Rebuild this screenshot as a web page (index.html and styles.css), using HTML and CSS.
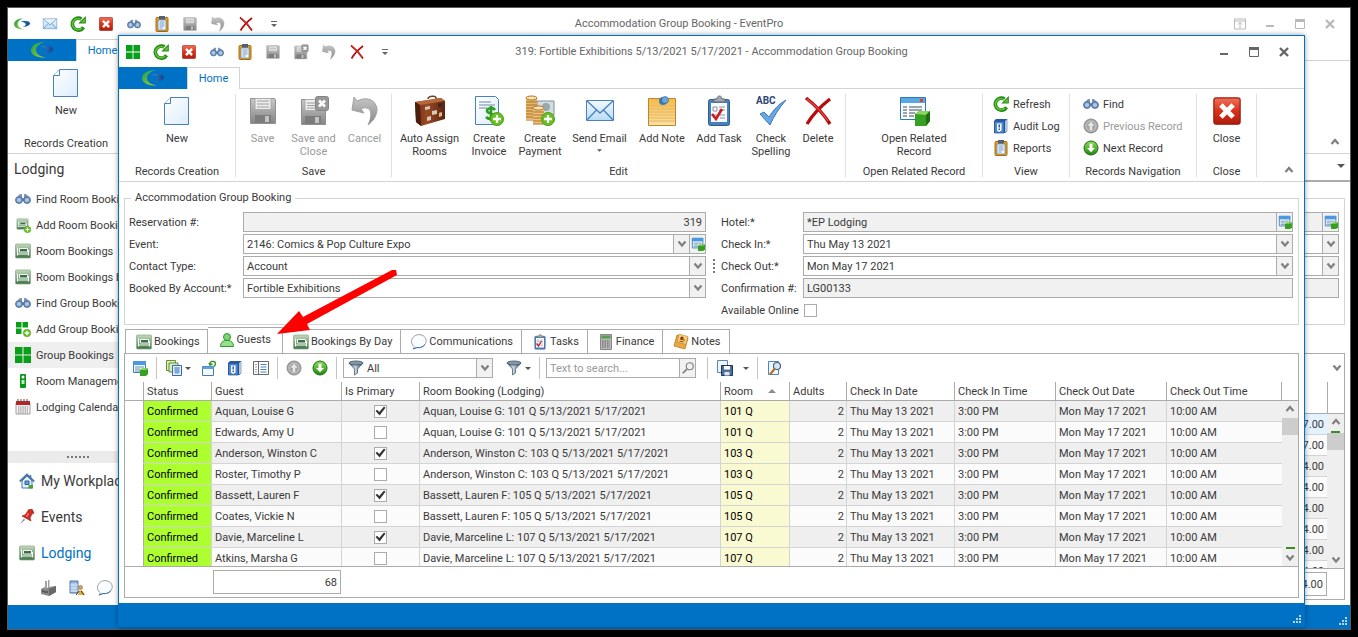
FILE: index.html
```html
<!DOCTYPE html>
<html lang="en">

<head>
  <meta charset="UTF-8">
  <meta name="viewport" content="width=device-width, initial-scale=1.0">
  <title>Accommodation Group Booking - EventPro</title>

  <link rel="stylesheet" href="styles.css">
</head>

<body>
  <!-- icon sprite -->
  <svg class="sprite" aria-hidden="true">
    <defs>
      <linearGradient id="g-red" x2="0" y2="1"><stop offset="0" stop-color="#f0705a"/><stop offset=".5" stop-color="#d8321c"/><stop offset="1" stop-color="#b01c0c"/></linearGradient>
      <linearGradient id="g-green" x2="0" y2="1"><stop offset="0" stop-color="#8fdc5a"/><stop offset="1" stop-color="#1f8a12"/></linearGradient>
      <linearGradient id="g-grey" x2="0" y2="1"><stop offset="0" stop-color="#c8c8c8"/><stop offset="1" stop-color="#858585"/></linearGradient>
      <linearGradient id="g-blue" x2="0" y2="1"><stop offset="0" stop-color="#f4faff"/><stop offset="1" stop-color="#b9dcf6"/></linearGradient>
      <linearGradient id="g-doc" x2="1" y2="1"><stop offset="0" stop-color="#ffffff"/><stop offset="1" stop-color="#dcedfc"/></linearGradient>
      <linearGradient id="g-bed" x2="0" y2="1"><stop offset="0" stop-color="#c8dcc0"/><stop offset=".5" stop-color="#7ca480"/><stop offset="1" stop-color="#3c7444"/></linearGradient>
      <linearGradient id="g-gold" x2="0" y2="1"><stop offset="0" stop-color="#f6ba48"/><stop offset="1" stop-color="#fbe3a0"/></linearGradient>
      <linearGradient id="g-brown" x2="1" y2="0"><stop offset="0" stop-color="#6e2c14"/><stop offset=".4" stop-color="#9a4a24"/><stop offset="1" stop-color="#5a2410"/></linearGradient>
      <linearGradient id="g-funnel" x2="1" y2="0"><stop offset="0" stop-color="#4a5b6c"/><stop offset=".45" stop-color="#c8d8e6"/><stop offset="1" stop-color="#2c3c4c"/></linearGradient>
      <linearGradient id="g-logo" x2="1" y2="1"><stop offset="0" stop-color="#18a050"/><stop offset="1" stop-color="#a6cf2c"/></linearGradient>
      <linearGradient id="g-swoosh" x2="1" y2="0"><stop offset="0" stop-color="#2c98cc"/><stop offset="1" stop-color="#1c3c8c"/></linearGradient>
    </defs>

    <symbol id="logo" viewBox="0 0 22 16">
      <path d="M14 0C5 0 0 4 0 8.500S6 16 15 15.500C9 14.500 5 12 5 8s4-7 9-8z" fill="url(#g-logo)"/>
      <path d="M9 4.500c4-1.500 12-1 13 2.500 0 3-5 5-10 5 3-1 4-2 4-3.500S13 5 9 4.500z" fill="url(#g-swoosh)"/>
    </symbol>
    <symbol id="mail" viewBox="0 0 32 32">
      <path d="M2.500 5.500h27v20h-27z" fill="url(#g-blue)" stroke="#4a80c0"/>
      <path d="M3 6l13 12L29 6M3 25l9.500-10M29 25l-9.500-10" fill="none" stroke="#4a80c0" stroke-width="1.300"/>
    </symbol>
    <symbol id="refresh" viewBox="0 0 16 16">
      <path d="M13.500 11.200A6 6 0 1 1 11.500 3" fill="none" stroke="#238a14" stroke-width="3.600"/>
      <path d="M15.800 0v7.500H8.300z" fill="#238a14"/>
      <path d="M12 12A5.500 5.500 0 1 1 11 3.600" fill="none" stroke="#62c43a" stroke-width="1.600"/>
      <path d="M14.800 2.400v4h-4z" fill="#62c43a"/>
    </symbol>
    <symbol id="close-red" viewBox="0 0 16 16">
      <rect x=".5" y=".5" width="15" height="15" rx="1.200" fill="url(#g-red)" stroke="#9c1a0c" stroke-width=".7"/>
      <path d="M5.500 5.500l5 5M10.500 5.500l-5 5" stroke="#fff" stroke-width="2.800" stroke-linecap="square"/>
    </symbol>
    <symbol id="find" viewBox="0 0 16 16">
      <path d="M3 5l2-2h2v4h2V3h2l3 3v4H2z" fill="#8098b8"/>
      <circle cx="4" cy="9" r="3.500" fill="#6c8cb4" stroke="#4c6c98" stroke-width=".8"/>
      <circle cx="12" cy="9" r="3.500" fill="#6c8cb4" stroke="#4c6c98" stroke-width=".8"/>
      <circle cx="4" cy="9" r="2.100" fill="#a8c8ec"/><circle cx="12" cy="9" r="2.100" fill="#a8c8ec"/>
    </symbol>
    <symbol id="report" viewBox="0 0 16 16">
      <rect x="2" y="1.500" width="12" height="14" rx="1" fill="#e8a020" stroke="#a86c10"/>
      <path d="M4 4h8v10H4z" fill="#f4faff" stroke="#5078a8" stroke-width=".7"/>
      <path d="M5 0h6v3.500H5z" fill="#50607c"/>
      <path d="M5.500 6h5M5.500 8h5M5.500 10h5M5.500 12h3" stroke="#6888b8" stroke-width=".9"/>
    </symbol>
    <symbol id="save" viewBox="0 0 32 32">
      <path d="M3.500 3.500h24l1 1v24h-25z" fill="url(#g-grey)" stroke="#909090"/>
      <path d="M8 3.500h16v11H8z" fill="#ededed" stroke="#aaa"/>
      <path d="M10 6h12M10 9h12M10 12h12" stroke="#9c9c9c"/>
      <path d="M8 20h16v8H8z" fill="#7c7c7c"/><path d="M18 21h4v6h-4z" fill="#c4c4c4"/>
    </symbol>
    <symbol id="save-close" viewBox="0 0 32 32">
      <path d="M3.500 4.500h24v25h-24z" fill="url(#g-grey)" stroke="#909090"/>
      <path d="M7 4.500h14v11H7z" fill="#ededed" stroke="#aaa"/>
      <path d="M9 8h12M9 10.500h12M9 13h12" stroke="#9c9c9c"/>
      <path d="M7 21h16v8H7z" fill="#7c7c7c"/><path d="M17 22h4v6h-4z" fill="#c4c4c4"/>
      <rect x="17.500" y="1.500" width="13" height="14" rx="2" fill="#989898" stroke="#848484"/>
      <path d="M21 5.500l6 6M27 5.500l-6 6" stroke="#fff" stroke-width="2.600"/>
    </symbol>
    <symbol id="undo" viewBox="0 0 32 32">
      <path d="M5 2l3 4c10-5 19-1 20 8 0 7-4 12-9 16 4-8 4-16-1-17-3-.5-4 0-6 1l3 4-12-3z" fill="url(#g-grey)" stroke="#a0a0a0"/>
    </symbol>
    <symbol id="delete" viewBox="0 0 32 32">
      <path d="M4 3c8 6 17 15 24 26M28 4C19 11 11 19 5 29" fill="none" stroke="#b80c0c" stroke-width="3.400"/>
      <path d="M5 4c8 6 15 13 21 22" fill="none" stroke="#e84848" stroke-width="1.200"/>
    </symbol>
    <symbol id="more" viewBox="0 0 8 8"><path d="M1 1h6v1H1zM1 4h6L4 7z" fill="#666"/></symbol>
    <symbol id="caret" viewBox="0 0 8 4"><path d="M0 0h8L4 4z" fill="#555"/></symbol>
    <symbol id="sort" viewBox="0 0 8 4"><path d="M0 4h8L4 0z" fill="#8c8c8c"/></symbol>
    <symbol id="chev-down" viewBox="0 0 10 8"><path d="M1.500 1.500L5 5.500l3.500-4" fill="none" stroke="#808080" stroke-width="2.200"/></symbol>
    <symbol id="chev-up" viewBox="0 0 10 8"><path d="M1.500 6L5 2l3.500 4" fill="none" stroke="#808080" stroke-width="2.200"/></symbol>
    <symbol id="groups" viewBox="0 0 16 16"><path d="M0 0h7.500v7.500H0zM8.500 0H16v7.500H8.500zM0 8.500h7.500V16H0zM8.500 8.500H16V16H8.500z" fill="#08a018"/></symbol>
    <symbol id="plus" viewBox="0 0 16 16"><circle cx="8" cy="8" r="7.500" fill="#68c020" stroke="#4a9a14"/><path d="M8 3.500v9M3.500 8h9" stroke="#fff" stroke-width="2.600"/></symbol>
    <symbol id="groups-add" viewBox="0 0 16 16"><path d="M1 1h5.500v5.500H1zM7.500 1H13v5.500H7.500zM1 7.500h5.500V13H1z" fill="#08a018"/><use href="#plus" x="8" y="8" width="8" height="8"/></symbol>
    <symbol id="new" viewBox="0 0 32 32"><path d="M9.500 2.500h18v27h-24v-21z" fill="url(#g-doc)" stroke="#4a80c0"/><path d="M9.500 2.500v6h-6" fill="#fff" stroke="#4a80c0"/></symbol>
    <symbol id="suitcase" viewBox="0 0 32 32">
      <path d="M14 4c0-3 8-4 8-1v2" fill="none" stroke="#6c4020" stroke-width="1.600"/>
      <path d="M1 7l26-4 4 3v18L7 31l-5-4z" fill="url(#g-brown)"/><path d="M1 7l5 3 25-4-4-3z" fill="#b4683c"/>
      <path d="M1 7l5 3 1 21-5-4z" fill="#4c1c0c"/>
      <path d="M11 12l5-1v3l-5 1zM18 16l5-1v4l-5 1zM13 22l4-1v4l-4 1z" fill="#d8c8b8"/><circle cx="26" cy="10" r="2" fill="#342824"/><path d="M25 18l3-1v4l-3 1z" fill="#e0b890"/>
    </symbol>
    <symbol id="invoice" viewBox="0 0 32 32">
      <path d="M2.500 1.500h20l3 3v25h-23z" fill="url(#g-doc)" stroke="#4a80c0"/><path d="M6 7h12M6 10h16M6 13h8" stroke="#7088a0"/>
      <path d="M22 15c-2-3-8-2-8 1s8 2 8 5-6 4-9 1M18 11v15" fill="none" stroke="#2c9c24" stroke-width="2.600"/>
      <use href="#plus" x="17" y="17" width="14" height="14"/>
    </symbol>
    <symbol id="payment" viewBox="0 0 32 32">
      <path d="M13 6h17v14H13z" fill="#d4dce0" stroke="#809098"/><circle cx="22" cy="12" r="4" fill="#98a8ac"/>
      <path d="M2 3h11v21H2z" fill="#e8b868"/><path d="M9 13h11v16H9z" fill="#f0c478"/>
      <ellipse cx="7.500" cy="3" rx="5.500" ry="2" fill="#fce4b0" stroke="#a8702c"/><ellipse cx="14.500" cy="13" rx="5.500" ry="2" fill="#fce4b0" stroke="#a8702c"/>
      <path d="M2 7h11M2 10h11M2 13h7M2 16h7M2 19h7M2 22h7M2 25h7M9 17h11M9 20h11M9 23h11M9 26h11M9 29h11" stroke="#a8702c"/>
      <use href="#plus" x="17" y="17" width="14" height="14"/>
    </symbol>
    <symbol id="note" viewBox="0 0 32 32">
      <path d="M2.500 3.500h27v27h-27z" fill="url(#g-gold)" stroke="#c08430"/><path d="M3 11h26M3 14h26M3 17h26M3 20h26M3 23h26M3 26h26" stroke="#e4b468"/>
      <circle cx="17" cy="6" r="4" fill="#3c78b8"/><circle cx="19" cy="5" r="3.500" fill="#6ca4dc" stroke="#2c5c94" stroke-width=".6"/>
    </symbol>
    <symbol id="task" viewBox="0 0 32 32">
      <rect x="5.500" y="4.500" width="21" height="26" rx="2" fill="#4880bc" stroke="#305c8c"/><path d="M8 8h16v19H8z" fill="#f8fbff"/>
      <path d="M11 7V4h3c0-4 5-4 5 0h3v3z" fill="#a0a8b0" stroke="#606870"/><path d="M10 12h4v4h-4zM16 12h6M16 15h6M17 20h5M17 23h5M10 20h4" fill="none" stroke="#8890a0"/>
      <path d="M9 19l4 5 6-10" fill="none" stroke="#c81c1c" stroke-width="2.600"/>
    </symbol>
    <symbol id="record" viewBox="0 0 32 32">
      <path d="M2.500 2.500h25v22h-25z" fill="#f8fcff" stroke="#2c78b8"/><path d="M3 3h24v5H3z" fill="#58a8e4"/><path d="M22 4h3v3h-3z" fill="#e04030"/>
      <path d="M5 12h4M5 15h4M5 18h4M5 21h4M11 12h13M11 15h13M11 18h6M11 21h5" stroke="#404c58" stroke-width="1.200"/>
      <path d="M17 19l4-3h11v10l-4 5H17z" fill="#38a020"/><path d="M17 19l4-3h11l-4 4z" fill="#88d860"/><path d="M28 20l4-4v10l-4 5z" fill="#1c7010"/>
    </symbol>
    <symbol id="record-small" viewBox="0 0 16 16">
      <path d="M1.500 1.500h12v11h-12z" fill="#f0f8ff" stroke="#3c80c0"/><path d="M1 1h13v4H1z" fill="#4c98e0"/>
      <path d="M3 7h9M3 9h5M3 11h5" stroke="#7090b0"/>
      <path d="M8 10l2-1.500h6V14l-2 2H8z" fill="#38a020"/><path d="M8 10l2-1.500h6L14 10z" fill="#88d860"/>
    </symbol>
    <symbol id="audit" viewBox="0 0 16 16">
      <path d="M1 3l2-2h11v12l-2 2H1z" fill="#2858a0"/><path d="M1.500 3.500h9.500V15H1.500z" fill="#4c88d0" stroke="#24508c" stroke-width=".7"/><path d="M12 3l2-2v12l-2 2z" fill="#dce8f4" stroke="#24508c" stroke-width=".5"/>
      <path d="M4 5.500h4.500v7L6 14l-2-1.500z" fill="#fff"/><path d="M5.500 6.500h1.500v3H5.500zM5.500 10.500h1.500V12H5.500z" fill="#2858a0"/>
    </symbol>
    <symbol id="up" viewBox="0 0 16 16"><circle cx="8" cy="8" r="7" fill="#a4a4a4" stroke="#8c8c8c"/><circle cx="8" cy="8" r="5" fill="none" stroke="#c8c8c8"/><path d="M8 3.800L4.500 7.800h2.300V12h2.400V7.800h2.300z" fill="#e8e8e8"/></symbol>
    <symbol id="down" viewBox="0 0 16 16"><circle cx="8" cy="8" r="7" fill="url(#g-green)" stroke="#1c6c10"/><path d="M8 12.200L4 8h2.500V3.800h3V8H12z" fill="#fff"/></symbol>
    <symbol id="bed" viewBox="0 0 16 16">
      <rect x=".5" y="1" width="15" height="14" rx="1" fill="url(#g-bed)" stroke="#88a888" stroke-width=".7"/>
      <path d="M2.500 4.500v8M13.500 7v5.500M2.500 11h11" fill="none" stroke="#f4f8f0" stroke-width="1.200"/><path d="M4.500 5.500h8v3.500h-8z" fill="#3c6c4c" stroke="#f4f8f0"/>
    </symbol>
    <symbol id="bed-add" viewBox="0 0 16 16"><use href="#bed" x="1" y="1" width="13" height="12"/><use href="#plus" x="9" y="9" width="7" height="7"/></symbol>
    <symbol id="manage" viewBox="0 0 16 16"><rect x="5" y="1" width="6" height="14" rx="1" fill="#089818"/><circle cx="8" cy="4" r="1.500" fill="#fff"/><path d="M6.500 7h3v4h-3z" fill="#c0e8c4"/></symbol>
    <symbol id="calendar" viewBox="0 0 16 16"><path d="M1 4h14v11H1z" fill="#f4f4f4" stroke="#a0a0a0"/><path d="M1 2h14v4H1z" fill="#b82424"/><path d="M3 0v3M6 0v3M9 0v3M12 0v3" stroke="#505050"/><path d="M3 8h10M3 10h10M3 12h10M3 14h10" stroke="#a8a8a8" stroke-dasharray="1.400 .8" stroke-width="1.300"/></symbol>
    <symbol id="house" viewBox="0 0 16 16"><path d="M3 8v7h10V8L8 3z" fill="#e4f0fc" stroke="#4878b0"/><path d="M.8 8.500L8 1.500l7.200 7" fill="none" stroke="#4878b0" stroke-width="1.800"/><path d="M11.500 2v3" stroke="#4878b0" stroke-width="1.500"/><path d="M6 8h4v3.500H6z" fill="#6ca0e0" stroke="#2c5ca0"/><path d="M10 12h4v3.500h-5z" fill="#50a030"/></symbol>
    <symbol id="pin" viewBox="0 0 16 16"><path d="M6 11l-5 4 4-5.500z" fill="#888"/><path d="M9 1l4-1 2 4-2 1-2 4 1 3-9-5 3-1 3-4z" fill="#d42c24" stroke="#8c1410" stroke-width=".6"/><path d="M9.500 4.500l-2 3" stroke="#fc9890" stroke-width="1.300"/></symbol>
    <symbol id="factory" viewBox="0 0 16 16"><path d="M0 9l4-2v2l4-2 7-1v6l-7 4-8-2z" fill="#888"/><path d="M8 9l7-3v6l-7 4z" fill="#686868"/><path d="M4 1h2v8H4zM7 0h1.500v8H7z" fill="#a0a0a0"/><path d="M2 10v2M4 11v2M6 11v2" stroke="#303030"/></symbol>
    <symbol id="company" viewBox="0 0 16 16"><path d="M1 1h8v12H1z" fill="#90b4dc" stroke="#5478a8"/><path d="M3 3v9M5 3v9M7 3v9M1 5h8M1 8h8M1 11h8" stroke="#e8f2fc" stroke-width=".7"/><circle cx="11.500" cy="7.500" r="2" fill="#e0a060" stroke="#805020" stroke-width=".5"/><path d="M9 15l1-4.500h3.500L16 15z" fill="#e8b040"/><path d="M10 11l-3 4M12 11l3 4" stroke="#303840"/></symbol>
    <symbol id="bubble" viewBox="0 0 16 16"><path d="M3.500 13C-3 8 2 .6 8 .6s10 6 5 11c-2 2-5 2.500-7 2L2 15z" fill="#fafdff" stroke="#98a0a8"/><path d="M2 15l4-1.500c4 .5 6-1 8-3" fill="none" stroke="#3c78b8"/></symbol>
    <symbol id="guest" viewBox="0 0 16 16"><circle cx="8" cy="5" r="3.500" fill="#80d478" stroke="#30982c"/><path d="M1.500 14.500c0-4 2.500-5.500 4.500-6h4c2 .5 4.500 2 4.500 6z" fill="#94e08c" stroke="#30982c"/></symbol>
    <symbol id="finance" viewBox="0 0 16 16"><path d="M2.500.5h11v15h-11z" fill="#b8b8b8" stroke="#888"/><path d="M3.500 1.500h9v3h-9z" fill="#50a050"/><path d="M4 7h8M4 9h8M4 11h8M4 13h8" stroke="#606060" stroke-dasharray="1.500 1"/></symbol>
    <symbol id="notes" viewBox="0 0 16 16"><path d="M4 1l11 3-3 11L1 12z" fill="#eca840" stroke="#b07020" stroke-width=".7"/><path d="M6 0l9 2.500-2 8L4 8z" fill="#f8d078" stroke="#b07020" stroke-width=".5"/><path d="M7 5l5 1.300M6.500 7l4 1" stroke="#805018"/><circle cx="9" cy="4" r="1.600" fill="#902c20"/></symbol>
    <symbol id="copies" viewBox="0 0 16 16"><path d="M.5.5h9v10h-9z" fill="#dcecc0" stroke="#609030"/><path d="M3 3h9v9H3z" fill="#dcecc0" stroke="#609030"/><path d="M6.500 5.500h9v10h-9z" fill="#e4f2ff" stroke="#3468a8"/><path d="M8 8h6M8 10h6M8 12h6M10 7v7M12 7v7" stroke="#4880c0" stroke-width=".8"/></symbol>
    <symbol id="restore" viewBox="0 0 16 16"><path d="M1.500 6.500h11v9h-11z" fill="#f4faff" stroke="#4878b0"/><path d="M1.500 6.500h11v2.500h-11z" fill="#60a0e0"/><path d="M9 4.500c0-3 2-3.500 4-3 2 .5 2 3 0 5M8 3l1 2 2.500-1" fill="none" stroke="#309020" stroke-width="1.400"/></symbol>
    <symbol id="panel" viewBox="0 0 16 16"><path d="M.5 1.500h15v13H.5z" fill="#fff" stroke="#686868"/><path d="M5.500 2v12" stroke="#686868"/><path d="M2 4.500h2M2 7h2M2 9.500h2M2 12h2" stroke="#a0a0a0"/><path d="M7.500 4.500h6M7.500 7h6M7.500 9.500h6M7.500 12h6" stroke="#4880c0"/></symbol>
    <symbol id="funnel" viewBox="0 0 16 16"><path d="M1 3l5.500 6v6l3-2V9L15 3z" fill="url(#g-funnel)" stroke="#405060" stroke-width=".7"/><ellipse cx="8" cy="3" rx="7" ry="2" fill="#8098ac" stroke="#405060" stroke-width=".8"/></symbol>
    <symbol id="search" viewBox="0 0 16 16"><circle cx="10" cy="6" r="4" fill="none" stroke="#808080" stroke-width="1.300"/><path d="M7 9l-5 5" stroke="#808080" stroke-width="2"/></symbol>
    <symbol id="export" viewBox="0 0 16 16"><path d="M.5.500h10v12H.5z" fill="#eef6ff" stroke="#5884c0"/><path d="M4.500 5.500h11v10h-11z" fill="#50709c" stroke="#1c3458"/><path d="M7 6h6v3.500H7z" fill="#fff"/><path d="M7.500 12h5v3.500h-5z" fill="#dce6f0"/></symbol>
    <symbol id="preview" viewBox="0 0 16 16"><path d="M2.500 1.500h10v13h-10z" fill="#eef6ff" stroke="#4884c8"/><circle cx="11" cy="6" r="3.500" fill="#d0e8f8" stroke="#50606c" stroke-width="1.200"/><path d="M8.500 9L4 14.500" stroke="#b87020" stroke-width="2.200"/></symbol>
    <symbol id="min" viewBox="0 0 10 10"><path d="M1 6h8v2H1z" fill="currentColor"/></symbol>
    <symbol id="max" viewBox="0 0 10 10"><path d="M.5.500h9v9h-9z" fill="none" stroke="currentColor"/><path d="M0 0h10v3H0z" fill="currentColor"/></symbol>
    <symbol id="x" viewBox="0 0 10 10"><path d="M1 1l8 8M9 1L1 9" stroke="currentColor" stroke-width="2.400"/></symbol>
    <symbol id="ribbon-toggle" viewBox="0 0 12 11"><path d="M.5.500h11v10H.5zM0 2.500h12M6 4v6M4 6l2-2 2 2" fill="none" stroke="currentColor"/></symbol>
    <symbol id="grip" viewBox="0 0 9 9"><path d="M6 0h2v2H6zM3 3h2v2H3zM6 3h2v2H6zM0 6h2v2H0zM3 6h2v2H3zM6 6h2v2H6z" fill="#b8d4ec"/></symbol>
  </svg>

  <!-- main window -->
  <div class="window main-window">
    <header class="titlebar">
      <div class="quick-access">
        <button aria-label="EventPro"><svg class="i16"><use href="#logo"/></svg></button>
        <button aria-label="Send email"><svg class="i16"><use href="#mail"/></svg></button>
        <button aria-label="Refresh"><svg class="i16"><use href="#refresh"/></svg></button>
        <button aria-label="Close record"><svg class="i14"><use href="#close-red"/></svg></button>
        <button aria-label="Find"><svg class="i14"><use href="#find"/></svg></button>
        <button aria-label="Reports"><svg class="i16"><use href="#report"/></svg></button>
        <button aria-label="Save"><svg class="i16"><use href="#save"/></svg></button>
        <button aria-label="Cancel"><svg class="i16"><use href="#undo"/></svg></button>
        <button aria-label="Delete"><svg class="i16"><use href="#delete"/></svg></button>
        <button aria-label="Customize"><svg class="i8"><use href="#more"/></svg></button>
      </div>
      <div class="title">Accommodation Group Booking - EventPro</div>
      <div class="window-controls inactive">
        <button aria-label="Ribbon options"><svg class="i12"><use href="#ribbon-toggle"/></svg></button>
        <button aria-label="Minimize"><svg class="i10"><use href="#min"/></svg></button>
        <button aria-label="Maximize"><svg class="i10"><use href="#max"/></svg></button>
        <button aria-label="Close"><svg class="i10"><use href="#x"/></svg></button>
      </div>
    </header>
    <nav class="ribbon-tabs">
      <button class="file-tab" aria-label="File"><svg><use href="#logo"/></svg></button>
      <button class="home-tab">Home</button>
    </nav>
    <div class="ribbon">
      <div class="group records">
        <div class="group-items"><button class="large"><svg><use href="#new"/></svg>New</button></div>
        <div class="caption">Records Creation</div>
      </div>
      <button class="collapse" aria-label="Collapse ribbon"><svg><use href="#chev-up"/></svg></button>
    </div>

    <div class="main-body">
      <aside class="sidebar">
        <h2>Lodging</h2>
        <nav class="nav-items">
          <a href="#"><svg><use href="#find"/></svg>Find Room Booking</a>
          <a href="#"><svg><use href="#bed-add"/></svg>Add Room Booking</a>
          <a href="#"><svg><use href="#bed"/></svg>Room Bookings</a>
          <a href="#"><svg><use href="#bed"/></svg>Room Bookings by Day</a>
          <a href="#"><svg><use href="#find"/></svg>Find Group Booking</a>
          <a href="#"><svg><use href="#groups-add"/></svg>Add Group Booking</a>
          <a href="#" class="active"><svg><use href="#groups"/></svg>Group Bookings</a>
          <a href="#"><svg><use href="#manage"/></svg>Room Management</a>
          <a href="#"><svg><use href="#calendar"/></svg>Lodging Calendar</a>
        </nav>
        <div class="nav-splitter"><span class="dots"></span></div>
        <nav class="modules">
          <a href="#"><svg><use href="#house"/></svg>My Workplace</a>
          <a href="#"><svg><use href="#pin"/></svg>Events</a>
          <a href="#" class="active"><svg><use href="#bed"/></svg>Lodging</a>
        </nav>
        <div class="module-icons">
          <button aria-label="Venue"><svg><use href="#factory"/></svg></button>
          <button aria-label="Accounts"><svg><use href="#company"/></svg></button>
          <button aria-label="Communications"><svg><use href="#bubble"/></svg></button>
        </div>
      </aside>

      <section class="back-view">
        <div class="view-bar"><svg><use href="#caret"/></svg></div>
        <div class="back-form">
          <div class="field readonly"><button aria-label="Open record"><svg class="i14"><use href="#record-small"/></svg></button></div>
          <div class="field"><button aria-label="Open list"><svg class="chev"><use href="#chev-down"/></svg></button></div>
          <div class="field"><button aria-label="Open list"><svg class="chev"><use href="#chev-down"/></svg></button></div>
          <div class="field readonly"></div>
        </div>
        <div class="back-grid">
          <div class="back-toolbar"><svg class="chev"><use href="#chev-down"/></svg></div>
          <div class="back-header"></div>
          <div class="back-rows">
            <ul>
              <li class="focused">537.00</li>
              <li>537.00</li>
              <li>624.00</li>
              <li>624.00</li>
              <li>624.00</li>
              <li>624.00</li>
              <li>624.00</li>
              <li>624.00</li>
            </ul>
            <div class="scroll marked-top">
              <svg class="chev"><use href="#chev-up"/></svg>
              <span class="mark"></span>
              <span class="thumb"></span>
              <svg class="chev end"><use href="#chev-down"/></svg>
            </div>
          </div>
          <div class="back-footer"><output>9,984.00</output></div>
        </div>
      </section>
    </div>
    <footer class="statusbar"><svg><use href="#grip"/></svg></footer>
  </div>

  <!-- group booking window -->
  <div class="window dialog">
    <header class="titlebar">
      <div class="quick-access">
        <button aria-label="Group booking"><svg class="i14"><use href="#groups"/></svg></button>
        <button aria-label="Refresh"><svg class="i16"><use href="#refresh"/></svg></button>
        <button aria-label="Close record"><svg class="i14"><use href="#close-red"/></svg></button>
        <button aria-label="Find"><svg class="i14"><use href="#find"/></svg></button>
        <button aria-label="Reports"><svg class="i16"><use href="#report"/></svg></button>
        <button aria-label="Save"><svg class="i16"><use href="#save"/></svg></button>
        <button aria-label="Save and close"><svg class="i16"><use href="#save-close"/></svg></button>
        <button aria-label="Cancel"><svg class="i16"><use href="#undo"/></svg></button>
        <button aria-label="Delete"><svg class="i16"><use href="#delete"/></svg></button>
        <button aria-label="Customize"><svg class="i8"><use href="#more"/></svg></button>
      </div>
      <div class="title">319: Fortible Exhibitions 5/13/2021 5/17/2021 - Accommodation Group Booking</div>
      <div class="window-controls">
        <button aria-label="Minimize"><svg class="i10"><use href="#min"/></svg></button>
        <button aria-label="Maximize"><svg class="i10"><use href="#max"/></svg></button>
        <button aria-label="Close"><svg class="i10"><use href="#x"/></svg></button>
      </div>
    </header>
    <nav class="ribbon-tabs">
      <button class="file-tab" aria-label="File"><svg><use href="#logo"/></svg></button>
      <button class="home-tab">Home</button>
    </nav>

    <div class="ribbon">
      <div class="group records">
        <div class="group-items"><button class="large"><svg><use href="#new"/></svg>New</button></div>
        <div class="caption">Records Creation</div>
      </div>
      <div class="group saving">
        <div class="group-items">
          <button class="large" disabled><svg><use href="#save"/></svg>Save</button>
          <button class="large" disabled><svg><use href="#save-close"/></svg>Save and<br>Close</button>
          <button class="large" disabled><svg><use href="#undo"/></svg>Cancel</button>
        </div>
        <div class="caption">Save</div>
      </div>
      <div class="group edit">
        <div class="group-items">
          <button class="large wide"><svg><use href="#suitcase"/></svg>Auto Assign<br>Rooms</button>
          <button class="large"><svg><use href="#invoice"/></svg>Create<br>Invoice</button>
          <button class="large"><svg><use href="#payment"/></svg>Create<br>Payment</button>
          <button class="large wide"><svg><use href="#mail"/></svg>Send Email<svg class="caret"><use href="#caret"/></svg></button>
          <button class="large mid"><svg><use href="#note"/></svg>Add Note</button>
          <button class="large mid"><svg><use href="#task"/></svg>Add Task</button>
          <button class="large slim">
            <svg viewBox="0 0 32 32"><path d="M5 19l4-2 5 5C19 14 24 9 31 5 24 13 19 21 15 30z" fill="#68a8e4" stroke="#3c78b8"/><text class="abc" x="1" y="9">ABC</text></svg>
            Check<br>Spelling
          </button>
          <button class="large slim"><svg><use href="#delete"/></svg>Delete</button>
        </div>
        <div class="caption">Edit</div>
      </div>
      <div class="group related">
        <div class="group-items"><button class="large wide"><svg><use href="#record"/></svg>Open Related<br>Record</button></div>
        <div class="caption">Open Related Record</div>
      </div>
      <div class="group view">
        <div class="group-items stacked">
          <button><svg class="i16"><use href="#refresh"/></svg>Refresh</button>
          <button><svg class="i16"><use href="#audit"/></svg>Audit Log</button>
          <button><svg class="i16"><use href="#report"/></svg>Reports</button>
        </div>
        <div class="caption">View</div>
      </div>
      <div class="group navigation">
        <div class="group-items stacked">
          <button><svg class="i16"><use href="#find"/></svg>Find</button>
          <button disabled><svg class="i16"><use href="#up"/></svg>Previous Record</button>
          <button><svg class="i16"><use href="#down"/></svg>Next Record</button>
        </div>
        <div class="caption">Records Navigation</div>
      </div>
      <div class="group close">
        <div class="group-items"><button class="large"><svg class="i28"><use href="#close-red"/></svg>Close</button></div>
        <div class="caption">Close</div>
      </div>
      <button class="collapse" aria-label="Collapse ribbon"><svg><use href="#chev-up"/></svg></button>
    </div>

    <main class="dialog-body">
      <fieldset class="booking">
        <legend>Accommodation Group Booking</legend>
        <div class="form-col left">
          <label for="reservation">Reservation #:</label>
          <div class="field readonly"><input id="reservation" class="number" type="text" value="319" readonly></div>

          <label for="event">Event:</label>
          <div class="field">
            <select id="event"><option>2146: Comics &amp; Pop Culture Expo</option></select>
            <span class="drop"><svg class="chev"><use href="#chev-down"/></svg></span>
            <button aria-label="Open event"><svg class="i14"><use href="#record-small"/></svg></button>
          </div>

          <label for="contact">Contact Type:</label>
          <div class="field">
            <select id="contact"><option>Account</option></select>
            <span class="drop"><svg class="chev"><use href="#chev-down"/></svg></span>
          </div>

          <label for="account">Booked By Account:*</label>
          <div class="field">
            <select id="account"><option>Fortible Exhibitions</option></select>
            <span class="drop"><svg class="chev"><use href="#chev-down"/></svg></span>
          </div>
        </div>
        <div class="form-splitter"><span class="dots vertical"></span></div>
        <div class="form-col right">
          <label for="hotel">Hotel:*</label>
          <div class="field readonly">
            <input id="hotel" type="text" value="*EP Lodging" readonly>
            <button aria-label="Open hotel"><svg class="i14"><use href="#record-small"/></svg></button>
          </div>

          <label for="checkin">Check In:*</label>
          <div class="field">
            <select id="checkin"><option>Thu May 13 2021</option></select>
            <span class="drop"><svg class="chev"><use href="#chev-down"/></svg></span>
          </div>

          <label for="checkout">Check Out:*</label>
          <div class="field">
            <select id="checkout"><option>Mon May 17 2021</option></select>
            <span class="drop"><svg class="chev"><use href="#chev-down"/></svg></span>
          </div>

          <label for="confirmation">Confirmation #:</label>
          <div class="field readonly"><input id="confirmation" type="text" value="LG00133" readonly></div>

          <label for="online">Available Online</label>
          <div class="check-row"><input id="online" type="checkbox"></div>
        </div>
      </fieldset>

      <div class="tabs" role="tablist">
        <button role="tab"><svg class="i16"><use href="#bed"/></svg>Bookings</button>
        <button role="tab" class="selected" aria-selected="true"><svg class="i16"><use href="#guest"/></svg>Guests</button>
        <button role="tab"><svg class="i16"><use href="#bed"/></svg>Bookings By Day</button>
        <button role="tab"><svg class="i16"><use href="#bubble"/></svg>Communications</button>
        <button role="tab"><svg class="i16"><use href="#task"/></svg>Tasks</button>
        <button role="tab"><svg class="i16"><use href="#finance"/></svg>Finance</button>
        <button role="tab"><svg class="i16"><use href="#notes"/></svg>Notes</button>
      </div>

      <section class="panel">
        <div class="toolbar">
          <button aria-label="Open record"><svg class="i16"><use href="#record-small"/></svg></button>
          <i class="sep"></i>
          <button class="dd" aria-label="Copy"><svg class="i16"><use href="#copies"/></svg><svg class="caret"><use href="#caret"/></svg></button>
          <button aria-label="Restore view"><svg class="i16"><use href="#restore"/></svg></button>
          <button aria-label="Audit log"><svg class="i16"><use href="#audit"/></svg></button>
          <button aria-label="Preview panel"><svg class="i16"><use href="#panel"/></svg></button>
          <i class="sep"></i>
          <button aria-label="Previous" disabled><svg class="i16"><use href="#up"/></svg></button>
          <button aria-label="Next"><svg class="i16"><use href="#down"/></svg></button>
          <i class="sep"></i>
          <div class="field tool-field">
            <svg class="i16"><use href="#funnel"/></svg>
            <select aria-label="Filter"><option>All</option></select>
            <span class="drop"><svg class="chev"><use href="#chev-down"/></svg></span>
          </div>
          <button class="dd filter" aria-label="Filter options"><svg class="i16"><use href="#funnel"/></svg><svg class="caret"><use href="#caret"/></svg></button>
          <i class="sep"></i>
          <div class="field tool-field">
            <input type="text" aria-label="Search" placeholder="Text to search...">
            <button aria-label="Run search"><svg class="i14"><use href="#search"/></svg></button>
          </div>
          <i class="sep after-search"></i>
          <button class="dd export" aria-label="Export"><svg class="i16"><use href="#export"/></svg><svg class="caret"><use href="#caret"/></svg></button>
          <i class="sep"></i>
          <button aria-label="Print preview"><svg class="i16"><use href="#preview"/></svg></button>
        </div>

        <div class="grid">
          <table>
            <colgroup>
              <col class="c-mark"><col class="c-status"><col class="c-guest"><col class="c-primary"><col class="c-booking"><col class="c-room"><col class="c-adults"><col class="c-indate"><col class="c-intime"><col class="c-outdate"><col class="c-outtime">
            </colgroup>
            <thead>
              <tr><th></th><th>Status</th><th>Guest</th><th>Is Primary</th><th>Room Booking (Lodging)</th><th>Room <svg class="sort"><use href="#sort"/></svg></th><th>Adults</th><th>Check In Date</th><th>Check In Time</th><th>Check Out Date</th><th>Check Out Time</th></tr>
            </thead>
            <tbody>
              <tr><td></td><td class="status">Confirmed</td><td>Aquan, Louise G</td><td class="primary"><input type="checkbox" aria-label="Is primary" checked></td><td>Aquan, Louise G: 101 Q 5/13/2021 5/17/2021</td><td class="room">101 Q</td><td class="number">2</td><td>Thu May 13 2021</td><td>3:00 PM</td><td>Mon May 17 2021</td><td>10:00 AM</td></tr>
              <tr><td></td><td class="status">Confirmed</td><td>Edwards, Amy U</td><td class="primary"><input type="checkbox" aria-label="Is primary"></td><td>Aquan, Louise G: 101 Q 5/13/2021 5/17/2021</td><td class="room">101 Q</td><td class="number">2</td><td>Thu May 13 2021</td><td>3:00 PM</td><td>Mon May 17 2021</td><td>10:00 AM</td></tr>
              <tr><td></td><td class="status">Confirmed</td><td>Anderson, Winston C</td><td class="primary"><input type="checkbox" aria-label="Is primary" checked></td><td>Anderson, Winston C: 103 Q 5/13/2021 5/17/2021</td><td class="room">103 Q</td><td class="number">2</td><td>Thu May 13 2021</td><td>3:00 PM</td><td>Mon May 17 2021</td><td>10:00 AM</td></tr>
              <tr><td></td><td class="status">Confirmed</td><td>Roster, Timothy P</td><td class="primary"><input type="checkbox" aria-label="Is primary"></td><td>Anderson, Winston C: 103 Q 5/13/2021 5/17/2021</td><td class="room">103 Q</td><td class="number">2</td><td>Thu May 13 2021</td><td>3:00 PM</td><td>Mon May 17 2021</td><td>10:00 AM</td></tr>
              <tr><td></td><td class="status">Confirmed</td><td>Bassett, Lauren F</td><td class="primary"><input type="checkbox" aria-label="Is primary" checked></td><td>Bassett, Lauren F: 105 Q 5/13/2021 5/17/2021</td><td class="room">105 Q</td><td class="number">2</td><td>Thu May 13 2021</td><td>3:00 PM</td><td>Mon May 17 2021</td><td>10:00 AM</td></tr>
              <tr><td></td><td class="status">Confirmed</td><td>Coates, Vickie N</td><td class="primary"><input type="checkbox" aria-label="Is primary"></td><td>Bassett, Lauren F: 105 Q 5/13/2021 5/17/2021</td><td class="room">105 Q</td><td class="number">2</td><td>Thu May 13 2021</td><td>3:00 PM</td><td>Mon May 17 2021</td><td>10:00 AM</td></tr>
              <tr><td></td><td class="status">Confirmed</td><td>Davie, Marceline L</td><td class="primary"><input type="checkbox" aria-label="Is primary" checked></td><td>Davie, Marceline L: 107 Q 5/13/2021 5/17/2021</td><td class="room">107 Q</td><td class="number">2</td><td>Thu May 13 2021</td><td>3:00 PM</td><td>Mon May 17 2021</td><td>10:00 AM</td></tr>
              <tr><td></td><td class="status">Confirmed</td><td>Atkins, Marsha G</td><td class="primary"><input type="checkbox" aria-label="Is primary"></td><td>Davie, Marceline L: 107 Q 5/13/2021 5/17/2021</td><td class="room">107 Q</td><td class="number">2</td><td>Thu May 13 2021</td><td>3:00 PM</td><td>Mon May 17 2021</td><td>10:00 AM</td></tr>
            </tbody>
          </table>
          <div class="scroll-col">
            <div class="scroll-head"></div>
            <div class="scroll">
              <svg class="chev"><use href="#chev-up"/></svg>
              <span class="thumb"></span>
              <span class="mark end"></span>
              <svg class="chev"><use href="#chev-down"/></svg>
            </div>
          </div>
        </div>
        <div class="grid-footer"><output>68</output></div>
      </section>
    </main>
    <footer class="statusbar"><svg><use href="#grip"/></svg></footer>
  </div>

  <!-- pointer to the Guests tab -->
  <svg class="arrow" viewBox="0 0 122 66" aria-hidden="true"><path d="M1 64l22-23 4 6 89-47h4l1 5-90 49 3 6z" fill="#fe0000"/></svg>
</body>

</html>
```

FILE: styles.css
```css
* {
  box-sizing: border-box;
}

body {
  margin: 0;
  height: 100vh;
  overflow: hidden;
  background: #000;
  color: #3a3a3a;
  font: 11px/15px Roboto, "Noto Sans", sans-serif;
}

button, input, select {
  margin: 0;
  padding: 0;
  border: 0;
  border-radius: 0;
  background: none;
  color: inherit;
  font: inherit;
}

button {
  display: flex;
  align-items: center;
  justify-content: center;
}

button:disabled {
  color: #9a9a9a;
}

select {
  appearance: none;
}

a {
  color: inherit;
  text-decoration: none;
}

svg {
  display: block;
  flex: none;
}

.sprite {
  position: absolute;
  width: 0;
  height: 0;
}

.i8 { width: 8px; height: 8px; }
.i10 { width: 10px; height: 10px; }
.i12 { width: 12px; height: 12px; }
.i14 { width: 14px; height: 14px; }
.i16 { width: 16px; height: 16px; }
.chev { width: 10px; height: 8px; }
.caret { width: 6px; height: 3px; }
.abc { font: bold 10px Roboto, sans-serif; fill: #2c4878; }

/* windows */
.window {
  position: absolute;
  display: flex;
  flex-direction: column;
  background: #fff;
}

.main-window {
  inset: 7px 7px;
  border: 1px solid #5c5c5c;
}

.dialog {
  inset: 35px 53px 9px 118px;
  border: 1px solid #0072c6;
  border-bottom-color: #0060a8;
  box-shadow: 0 0 5px rgba(0, 0, 0, .4);
}

.titlebar {
  display: grid;
  grid-template-columns: 1fr auto 1fr;
  align-items: center;
  height: 31px;
  flex: none;
}

.title {
  text-align: center;
  color: #666;
}

.quick-access {
  display: flex;
}

.quick-access button {
  width: 28px;
  height: 28px;
}

.window-controls {
  display: flex;
  justify-content: flex-end;
  padding-right: 5px;
  color: #666;
}

.window-controls.inactive {
  color: #bababa;
}

.window-controls button {
  width: 30px;
  height: 28px;
}

.statusbar {
  display: flex;
  flex: none;
  align-items: flex-end;
  justify-content: flex-end;
  height: 24px;
  padding: 3px 2px;
  background: #0072c6;
}

.statusbar svg {
  width: 9px;
  height: 9px;
}

/* ribbon */
.ribbon-tabs {
  display: flex;
  flex: none;
  height: 22px;
  border-bottom: 1px solid #d4d4d4;
}

.file-tab, .home-tab {
  height: 22px;
}

.file-tab {
  width: 68px;
  background: #0072c6;
}

.file-tab svg {
  width: 22px;
  height: 16px;
}

.home-tab {
  width: 53px;
  border: 1px solid #d4d4d4;
  border-bottom: 0;
  background: #fff;
  color: #0072c6;
}

.ribbon {
  display: flex;
  flex: none;
  height: 93px;
  border-bottom: 1px solid #d4d4d4;
}

.group {
  display: flex;
  flex-direction: column;
  padding-top: 6px;
  border-image: linear-gradient(transparent 6px, #e0e0e0 6px, #e0e0e0 87px, transparent 87px) 1;
  border-width: 0 1px 0 0;
  border-style: solid;
}

.main-window .group {
  border-image: none;
  border-color: transparent;
}

.group-items {
  display: flex;
  flex: 1;
  justify-content: center;
}

.group.records { width: 117px; }
.group.saving { width: 156px; }
.group.edit { width: 454px; }
.group.related { width: 137px; }
.group.view { width: 87px; }
.group.navigation { width: 127px; }
.group.close { width: 60px; }

.caption {
  height: 17px;
  text-align: center;
}

.large {
  flex-direction: column;
  justify-content: flex-start;
  width: 51px;
  line-height: 13px;
  white-space: nowrap;
}

.edit .wide, .related .wide { width: 68px; }
.edit .mid { width: 57px; }
.edit .slim { width: 47px; }

.large svg {
  width: 32px;
  height: 32px;
  margin-bottom: 5px;
}

.large .i28 {
  width: 28px;
  height: 28px;
  margin: 2px 0 7px;
}

.large .caret {
  width: 5px;
  height: 3px;
  margin-top: 4px;
}

.stacked {
  flex-direction: column;
  justify-content: flex-start;
  padding-left: 10px;
}

.navigation .stacked {
  padding-left: 13px;
}

.stacked button {
  justify-content: flex-start;
  gap: 4px;
  height: 22px;
}

.view, .navigation {
  padding-top: 4px;
}

.collapse {
  align-self: flex-end;
  margin-left: auto;
  padding: 7px 10px;
}

.collapse svg {
  width: 10px;
  height: 8px;
}

/* sidebar */
.main-body {
  display: flex;
  flex: 1;
  min-height: 0;
}

.sidebar {
  display: flex;
  flex-direction: column;
  width: 240px;
}

.sidebar h2 {
  margin: 0;
  padding: 7px 6px 8px;
  font-size: 14px;
  font-weight: normal;
  line-height: 17px;
}

.nav-items {
  flex: 1;
}

.nav-items a {
  display: flex;
  align-items: center;
  gap: 5px;
  height: 26px;
  padding-left: 7px;
}

.nav-items svg, .modules svg, .module-icons svg {
  width: 16px;
  height: 16px;
}

.nav-items .active {
  background: #efefef;
}

.nav-splitter {
  display: flex;
  align-items: center;
  height: 12px;
  padding-left: 59px;
  background: #ebebeb;
}

.dots {
  width: 23px;
  height: 2px;
  background: repeating-linear-gradient(90deg, #777 0 2px, transparent 2px 4px);
}

.dots.vertical {
  width: 2px;
  height: 14px;
  background: repeating-linear-gradient(#777 0 2px, transparent 2px 4px);
}

.modules a {
  display: flex;
  align-items: center;
  gap: 6px;
  height: 36px;
  padding-left: 11px;
  font-size: 14px;
}

.modules .active {
  color: #0072c6;
}

.module-icons {
  display: flex;
  gap: 12px;
  height: 34px;
  padding-left: 33px;
}

/* list view behind the dialog */
.back-view {
  display: flex;
  flex: 1;
  flex-direction: column;
}

.view-bar {
  display: flex;
  align-items: center;
  justify-content: flex-end;
  height: 28px;
  padding: 0 5px 2px;
  border-bottom: 2px solid #ababab;
}

.view-bar svg {
  width: 8px;
  height: 4px;
}

.back-form {
  display: flex;
  flex-direction: column;
  gap: 2px;
  height: 127px;
  margin: 16px 5px 28px;
  padding: 13px 5px;
  border: 1px solid #d4d4d4;
}

.back-form .field {
  justify-content: flex-end;
}

.back-grid {
  display: flex;
  flex: 1;
  flex-direction: column;
  min-height: 0;
  margin: 0 5px 5px;
  border: 1px solid #ababab;
}

.back-toolbar {
  display: flex;
  align-items: center;
  justify-content: flex-end;
  height: 28px;
  padding-right: 2px;
}

.back-header {
  height: 32px;
  border-bottom: 1px solid #ababab;
}

.back-header::after {
  content: "";
  display: block;
  height: 31px;
  margin-right: 16px;
  border-right: 1px solid #ababab;
}

.back-rows {
  display: flex;
  flex: 1;
  min-height: 0;
  overflow: hidden;
}

.back-rows ul {
  flex: 1;
  margin: 0;
  padding: 0;
  list-style: none;
}

.back-rows li {
  height: 21px;
  padding: 3px 3px 0;
  border-bottom: 1px solid #d4d4d4;
  background: #fbfbfb;
  text-align: right;
}

.back-rows li:nth-child(odd) {
  background: #efefef;
}

.back-rows li.focused {
  background: #e4f2fe;
}

.back-footer {
  height: 31px;
  padding: 3px 17px 3px 0;
  border-top: 1px solid #ababab;
}

.back-footer output {
  display: block;
  height: 24px;
  padding: 4px 3px;
  border: 1px solid #ababab;
  text-align: right;
}

/* booking form */
.dialog-body {
  display: flex;
  flex: 1;
  flex-direction: column;
  min-height: 0;
  padding: 9px 5px 5px;
}

.booking {
  display: grid;
  grid-template-columns: 577fr 15px 572fr;
  min-width: 0;
  margin: 0;
  padding: 7px 5px 4px 4px;
  border: 1px solid #d4d4d4;
}

.booking legend {
  margin-left: 2px;
  padding: 0 4px;
  line-height: 14px;
}

.form-col {
  display: grid;
  grid-auto-rows: 20px;
  align-content: start;
  align-items: center;
  row-gap: 2px;
}

.form-col.left { grid-template-columns: 114px 1fr; }
.form-col.right { grid-template-columns: 82px 1fr; }

.form-splitter {
  display: flex;
  align-items: center;
  justify-content: center;
}

.form-col label {
  padding-top: 1px;
}

.field {
  display: flex;
  height: 20px;
  border: 1px solid #ababab;
  background: #fff;
}

.field.readonly {
  background: #f1f1f1;
}

.field input, .field select {
  flex: 1;
  min-width: 0;
  height: 18px;
  padding: 0 3px;
  outline: 0;
}

.field .drop, .field button {
  display: flex;
  align-items: center;
  justify-content: center;
  width: 16px;
  border-left: 1px solid #ababab;
  background: #f1f1f1;
}

.number {
  text-align: right;
}

.check-row {
  display: flex;
  padding-left: 1px;
}

input[type="checkbox"] {
  display: block;
  appearance: none;
  width: 13px;
  height: 13px;
  border: 1px solid #ababab;
  background: #fff;
}

input[type="checkbox"]:checked::after {
  content: "";
  display: block;
  width: 11px;
  height: 11px;
  background: #333;
  clip-path: polygon(5% 50%, 20% 38%, 38% 60%, 82% 8%, 95% 20%, 42% 92%);
}

/* tabs */
.tabs {
  display: flex;
  align-items: flex-end;
  height: 27px;
  margin: 2px 0 -1px;
  padding-left: 1px;
}

.tabs button {
  gap: 2px;
  height: 25px;
  padding: 0 8px 0 10px;
  border: 1px solid #ababab;
  border-left-width: 0;
  background: #fff;
}

.tabs button:first-child {
  padding-right: 7px;
  border-left-width: 1px;
}

.tabs .selected {
  height: 27px;
  padding: 0 11px 2px;
  border-bottom-color: #fff;
}

.panel {
  display: flex;
  flex: 1;
  flex-direction: column;
  min-height: 0;
  border: 1px solid #ababab;
}

.toolbar {
  display: flex;
  flex: none;
  align-items: center;
  height: 28px;
  padding-left: 2px;
}

.toolbar > button {
  width: 26px;
  height: 24px;
}

.toolbar > .dd {
  gap: 3px;
  width: 36px;
}

.toolbar > .dd.filter {
  margin-left: 7px;
}

.toolbar > .dd.export {
  gap: 10px;
  width: 43px;
}

.sep {
  width: 1px;
  height: 22px;
  margin: 0 3px;
  background: #c4c4c4;
}

.sep.after-search {
  margin-left: 11px;
}

.tool-field {
  align-items: center;
  width: 150px;
  margin-left: 3px;
}

.tool-field > svg {
  margin-left: 4px;
}

.tool-field .drop, .tool-field button {
  height: 18px;
}

.tool-field input::placeholder {
  color: #999;
}

/* guests grid */
.grid {
  display: flex;
  flex: 1;
  min-height: 0;
  overflow: hidden;
}

.grid table {
  flex: 1;
  width: 0;
  align-self: flex-start;
  border-collapse: separate;
  border-spacing: 0;
  table-layout: fixed;
}

.c-mark { width: 19px; }
.c-status { width: 68px; }
.c-guest { width: 130px; }
.c-primary { width: 78px; }
.c-room { width: 69px; }
.c-adults { width: 57px; }
.c-indate { width: 108px; }
.c-intime { width: 101px; }
.c-outdate { width: 111px; }
.c-outtime { width: 115px; }

.grid th {
  height: 19px;
  padding: 1px 3px 0;
  border-right: 1px solid #ababab;
  border-bottom: 1px solid #ababab;
  font-weight: normal;
  text-align: left;
  white-space: nowrap;
}

.grid .sort {
  display: inline-block;
  width: 8px;
  height: 4px;
  margin: 0 0 2px 12px;
}

.grid td {
  height: 21px;
  padding: 1px 3px 0;
  border-right: 1px solid #d4d4d4;
  border-bottom: 1px solid #d4d4d4;
  background: #fbfbfb;
  white-space: nowrap;
}

.grid tr:nth-child(odd) td {
  background: #efefef;
}

.grid tbody tr td:first-child {
  border-right-color: #ababab;
  border-bottom-color: #fff;
  background: #fff;
}

.grid tbody tr .status.status {
  background: #adff2f;
  color: #000;
}

.grid tbody tr .room.room {
  background: #fafad2;
  color: #000;
}

.grid td.primary {
  padding-top: 0;
}

.grid td.number {
  padding-right: 2px;
}

.grid td:last-child {
  border-right: 0;
}

.primary input[type="checkbox"] {
  margin: 0 auto;
}

.scroll-col {
  display: flex;
  flex-direction: column;
  width: 16px;
}

.scroll-head {
  height: 19px;
  border-bottom: 1px solid #ababab;
}

.scroll {
  display: flex;
  flex: 1;
  flex-direction: column;
  align-items: center;
  padding: 4px 0;
  background: #efefef;
}

.back-rows .scroll {
  flex: none;
  width: 17px;
}

.thumb {
  width: 100%;
  height: 17px;
  margin-top: 5px;
  background: #cdcdcd;
}

.marked-top .thumb {
  margin-top: 0;
}

.mark {
  width: 9px;
  height: 2px;
  background: #3c8c28;
}

.marked-top .mark {
  margin-top: 5px;
}

.mark.end {
  margin: auto 0 5px;
}

.chev.end {
  margin-top: auto;
}

.grid-footer {
  flex: none;
  height: 31px;
  padding: 3px 0 3px 88px;
  border-top: 1px solid #ababab;
}

.grid-footer output {
  display: block;
  width: 128px;
  height: 24px;
  padding: 4px 3px;
  border: 1px solid #ababab;
  text-align: right;
}

.arrow {
  position: absolute;
  top: 270px;
  left: 276px;
  width: 122px;
  height: 66px;
}
```
